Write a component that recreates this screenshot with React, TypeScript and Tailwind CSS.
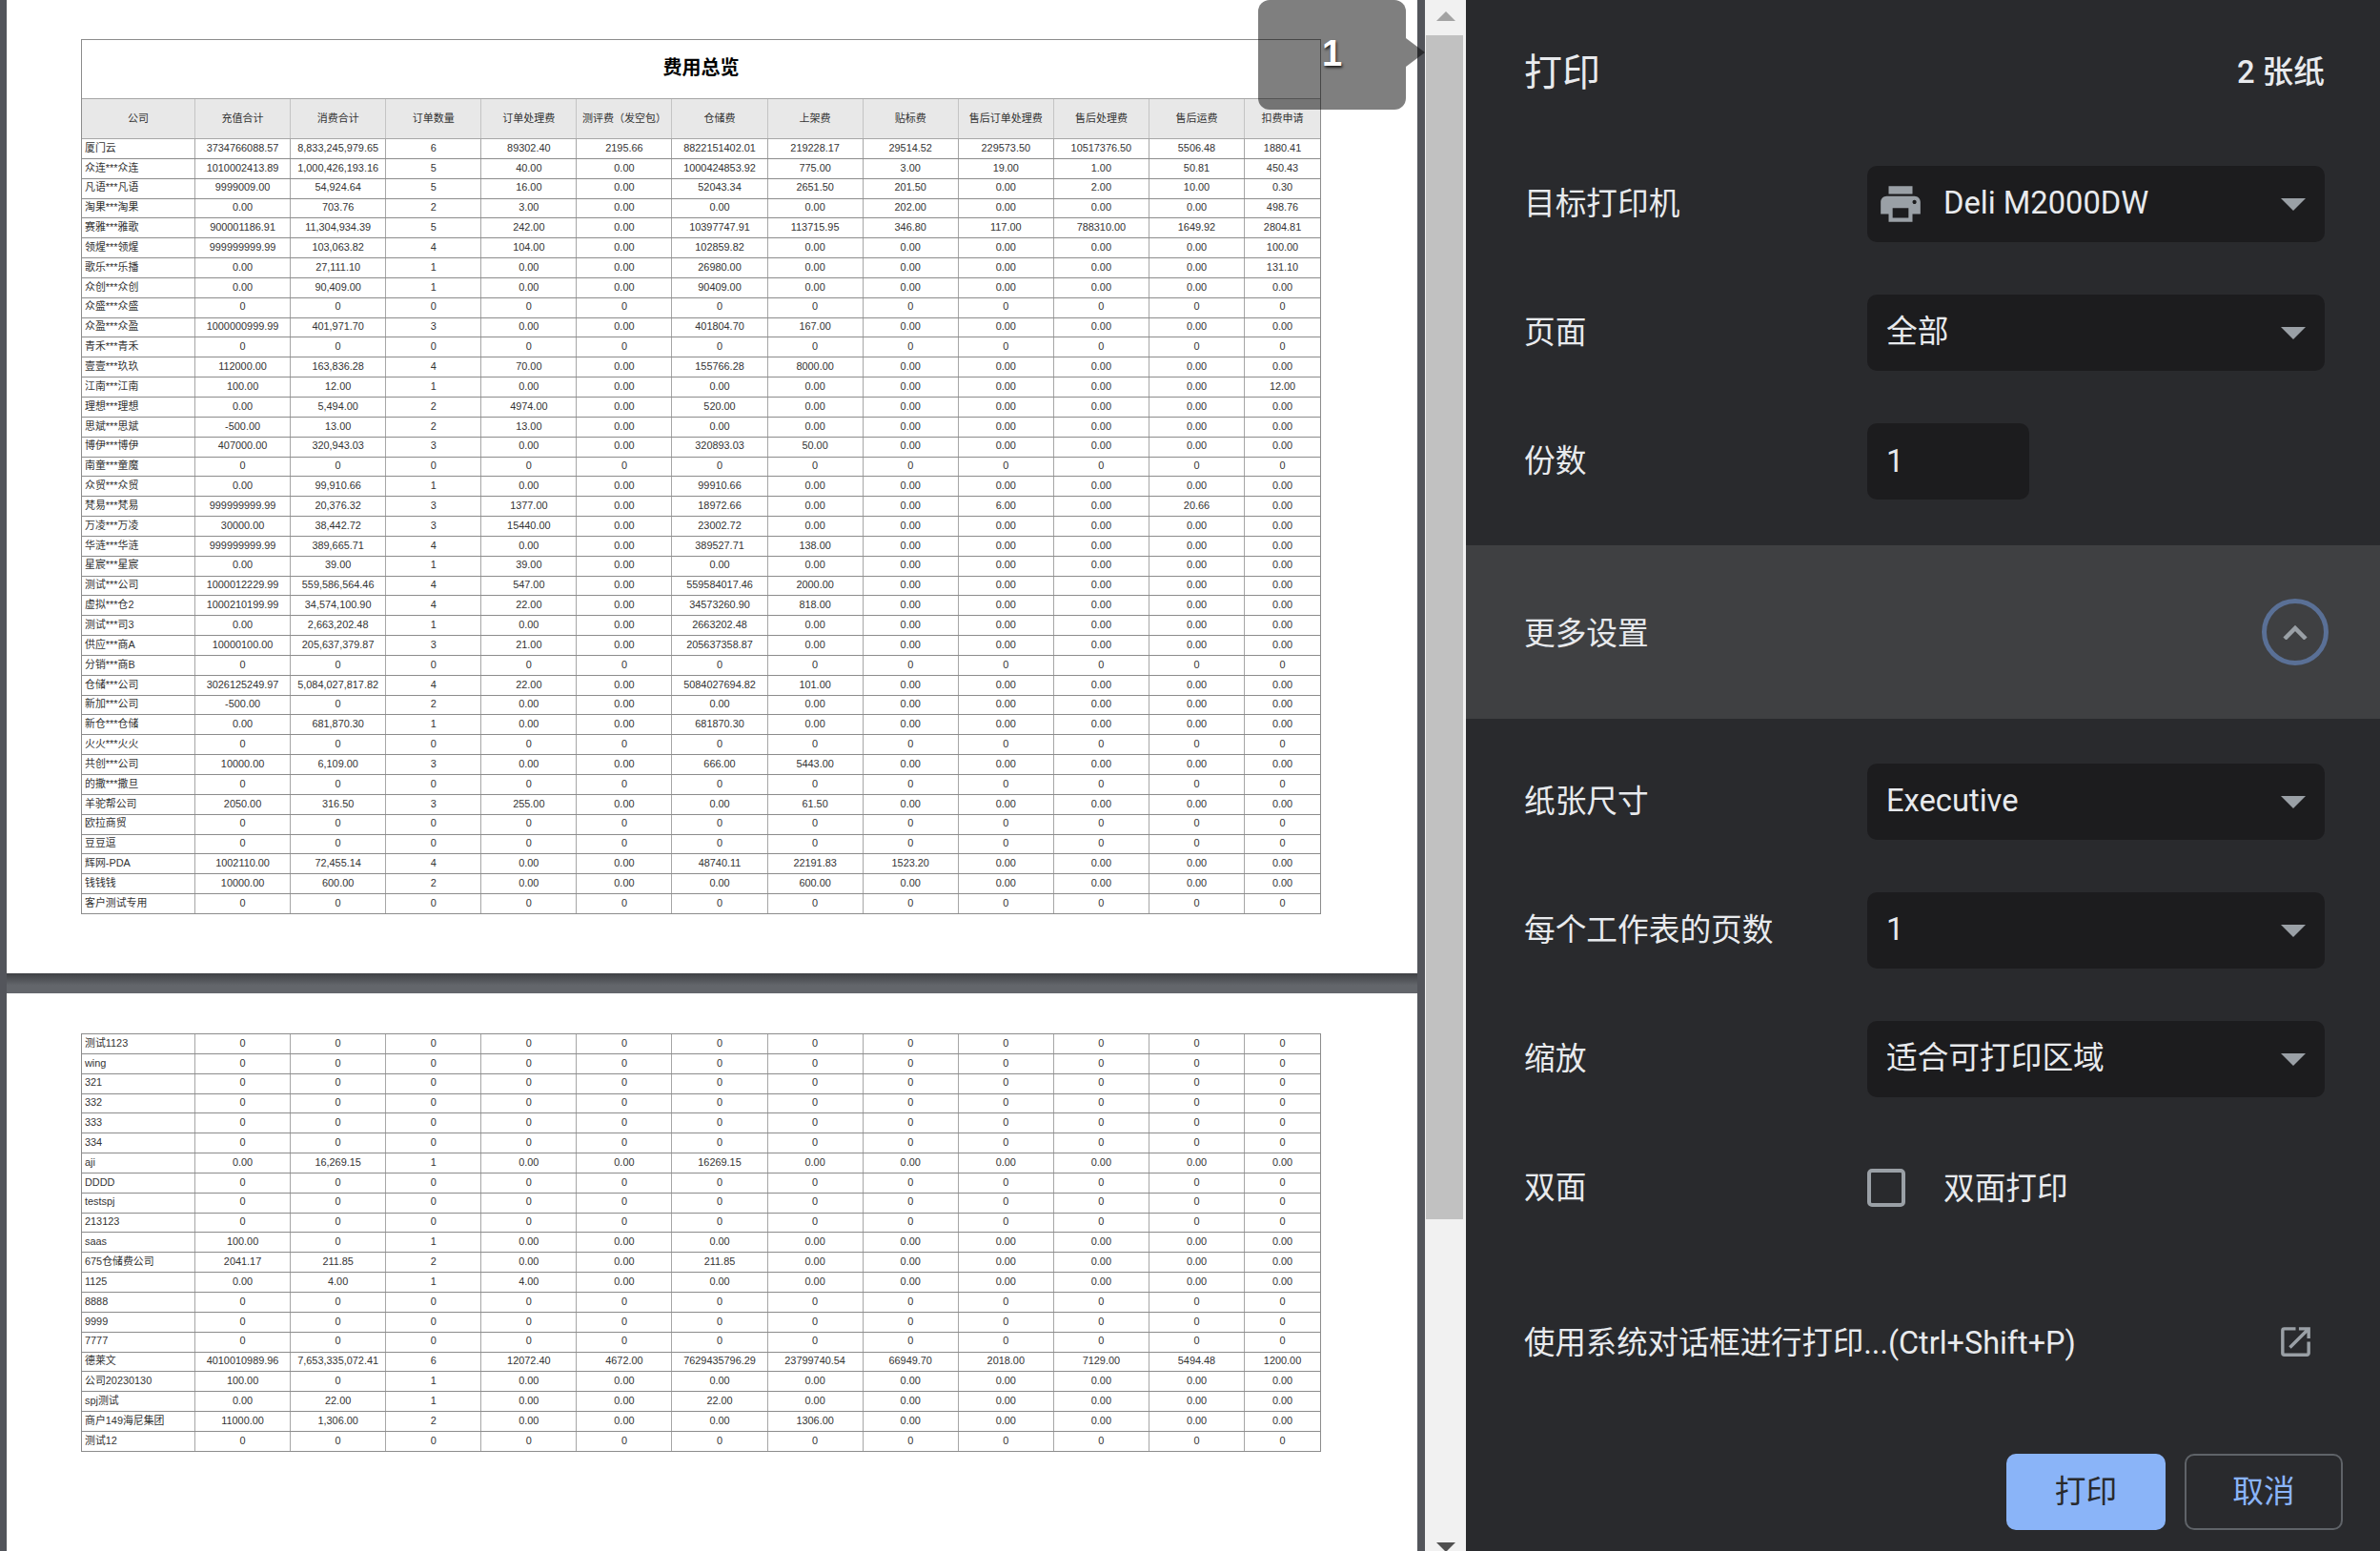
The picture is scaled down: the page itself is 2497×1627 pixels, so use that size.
const headers = ["公司", "充值合计", "消费合计", "订单数量", "订单处理费", "测评费（发空包）", "仓储费", "上架费", "贴标费", "售后订单处理费", "售后处理费", "售后运费", "扣费申请"];

// name|充值|消费|订单数|处理费|测评费|仓储费|上架费|贴标费|售后订单|售后处理|售后运费|扣费
// a row with only a name is all zeros, missing tail values are 0.00
const pageOne = [
  "厦门云|3734766088.57|8,833,245,979.65|6|89302.40|2195.66|8822151402.01|219228.17|29514.52|229573.50|10517376.50|5506.48|1880.41",
  "众连***众连|1010002413.89|1,000,426,193.16|5|40.00|0.00|1000424853.92|775.00|3.00|19.00|1.00|50.81|450.43",
  "凡语***凡语|9999009.00|54,924.64|5|16.00|0.00|52043.34|2651.50|201.50|0.00|2.00|10.00|0.30",
  "淘果***淘果|0.00|703.76|2|3.00|0.00|0.00|0.00|202.00|0.00|0.00|0.00|498.76",
  "赛雅***雅歌|900001186.91|11,304,934.39|5|242.00|0.00|10397747.91|113715.95|346.80|117.00|788310.00|1649.92|2804.81",
  "领煋***领煋|999999999.99|103,063.82|4|104.00|0.00|102859.82|0.00|0.00|0.00|0.00|0.00|100.00",
  "歌乐***乐播|0.00|27,111.10|1|0.00|0.00|26980.00|0.00|0.00|0.00|0.00|0.00|131.10",
  "众创***众创|0.00|90,409.00|1|0.00|0.00|90409.00",
  "众盛***众盛",
  "众盈***众盈|1000000999.99|401,971.70|3|0.00|0.00|401804.70|167.00",
  "青禾***青禾",
  "壹壹***玖玖|112000.00|163,836.28|4|70.00|0.00|155766.28|8000.00",
  "江南***江南|100.00|12.00|1|0.00|0.00|0.00|0.00|0.00|0.00|0.00|0.00|12.00",
  "理想***理想|0.00|5,494.00|2|4974.00|0.00|520.00",
  "思斌***思斌|-500.00|13.00|2|13.00|0.00|0.00",
  "博伊***博伊|407000.00|320,943.03|3|0.00|0.00|320893.03|50.00",
  "南童***童魔",
  "众贸***众贸|0.00|99,910.66|1|0.00|0.00|99910.66",
  "梵易***梵易|999999999.99|20,376.32|3|1377.00|0.00|18972.66|0.00|0.00|6.00|0.00|20.66|0.00",
  "万凌***万凌|30000.00|38,442.72|3|15440.00|0.00|23002.72",
  "华涟***华涟|999999999.99|389,665.71|4|0.00|0.00|389527.71|138.00",
  "星宸***星宸|0.00|39.00|1|39.00|0.00|0.00",
  "测试***公司|1000012229.99|559,586,564.46|4|547.00|0.00|559584017.46|2000.00",
  "虚拟***仓2|1000210199.99|34,574,100.90|4|22.00|0.00|34573260.90|818.00",
  "测试***司3|0.00|2,663,202.48|1|0.00|0.00|2663202.48",
  "供应***商A|10000100.00|205,637,379.87|3|21.00|0.00|205637358.87",
  "分销***商B",
  "仓储***公司|3026125249.97|5,084,027,817.82|4|22.00|0.00|5084027694.82|101.00",
  "新加***公司|-500.00|0|2|0.00|0.00|0.00",
  "新仓***仓储|0.00|681,870.30|1|0.00|0.00|681870.30",
  "火火***火火",
  "共创***公司|10000.00|6,109.00|3|0.00|0.00|666.00|5443.00",
  "的撒***撒旦",
  "羊驼帮公司|2050.00|316.50|3|255.00|0.00|0.00|61.50",
  "欧拉商贸",
  "豆豆逗",
  "辉网-PDA|1002110.00|72,455.14|4|0.00|0.00|48740.11|22191.83|1523.20",
  "钱钱钱|10000.00|600.00|2|0.00|0.00|0.00|600.00",
  "客户测试专用",
];

const pageTwo = [
  "测试1123",
  "wing",
  "321",
  "332",
  "333",
  "334",
  "aji|0.00|16,269.15|1|0.00|0.00|16269.15",
  "DDDD",
  "testspj",
  "213123",
  "saas|100.00|0|1|0.00|0.00|0.00",
  "675仓储费公司|2041.17|211.85|2|0.00|0.00|211.85",
  "1125|0.00|4.00|1|4.00|0.00|0.00",
  "8888",
  "9999",
  "7777",
  "德莱文|4010010989.96|7,653,335,072.41|6|12072.40|4672.00|7629435796.29|23799740.54|66949.70|2018.00|7129.00|5494.48|1200.00",
  "公司20230130|100.00|0|1|0.00|0.00|0.00",
  "spj测试|0.00|22.00|1|0.00|0.00|22.00",
  "商户149海尼集团|11000.00|1,306.00|2|0.00|0.00|0.00|1306.00",
  "测试12",
];

const parseRow = (line: string) => {
  const parts = line.split("|");
  const fill = parts.length === 1 ? "0" : "0.00";
  return Array.from({ length: 13 }, (_, i) => parts[i] ?? fill);
};

const Row = ({ line }: { line: string }) => (
  <div className="grid h-[20.85px] grid-cols-[119px_repeat(11,100.1px)_1fr] border-b border-[#8c8c8c]">
    {parseRow(line).map((cell, i) => (
      <div
        key={i}
        className={
          i === 0
            ? "flex items-center border-r border-[#a6a6a6] pb-[2px] pl-[3px] whitespace-nowrap"
            : "flex items-center justify-center border-r border-[#a6a6a6] pb-[2px] whitespace-nowrap last:border-r-0"
        }
      >
        {cell}
      </div>
    ))}
  </div>
);

const Caret = () => (
  <svg viewBox="0 0 26 13" className="h-[13px] w-[26px] shrink-0">
    <polygon points="0,0 26,0 13,13" fill="#9aa0a6" />
  </svg>
);

const Select = ({ children }: { children: React.ReactNode }) => (
  <div className="flex h-[80px] w-[480px] items-center justify-between rounded-[10px] bg-[#1c1c1e] pr-5 pl-5">
    <div className="flex items-center pb-[2px]">{children}</div>
    <Caret />
  </div>
);

const Field = ({ label, children, className }: { label: string; children: React.ReactNode; className: string }) => (
  <div className={`flex items-center ${className}`}>
    <div className="w-[360px]">{label}</div>
    {children}
  </div>
);

export default function App() {
  return (
    <div className="relative flex h-[1627px] w-[2497px] overflow-hidden bg-[#292a2d]">
      {/* preview */}
      <div className="flex h-full w-[1495px] shrink-0 flex-col bg-[#53555b] pr-2 pl-[7px] font-['Liberation_Sans','Noto_Sans_CJK_SC',sans-serif] text-[10.9px] text-[#333]">
        <div className="h-[1021px] shrink-0 bg-white pt-[41px] pl-[78px]">
          <div className="w-[1301px] border-t border-l border-r border-[#8c8c8c]">
            <div className="flex h-[62px] items-center justify-center border-b border-[#a6a6a6] pb-[3px] text-[20px] font-bold text-black">
              费用总览
            </div>
            <div className="grid h-[42px] grid-cols-[119px_repeat(11,100.1px)_1fr] border-b border-[#a6a6a6] bg-[#e8e8e8]">
              {headers.map((h) => (
                <div key={h} className="flex items-center justify-center border-r border-[#c4c4c4] text-[11px] whitespace-nowrap last:border-r-0">
                  {h}
                </div>
              ))}
            </div>
            {pageOne.map((line) => (
              <Row key={line} line={line} />
            ))}
          </div>
        </div>
        <div className="h-[21px] shrink-0 bg-gradient-to-b from-[#3f4145] to-[#63666b] to-60%" />
        <div className="flex-1 bg-white pt-[42px] pl-[78px]">
          <div className="w-[1301px] border-t border-l border-r border-[#8c8c8c]">
            {pageTwo.map((line) => (
              <Row key={line} line={line} />
            ))}
          </div>
        </div>
      </div>

      {/* scrollbar */}
      <div className="flex h-full w-[43px] shrink-0 flex-col bg-[#f1f1f1]">
        <div className="flex h-[37px] items-start justify-center pt-3">
          <svg viewBox="0 0 20 10" className="h-[10px] w-[20px]">
            <polygon points="10,0 20,10 0,10" fill="#a3a3a3" />
          </svg>
        </div>
        <div className="ml-px h-[1242px] w-[39px] bg-[#c1c1c1]" />
        <div className="flex-1" />
        <div className="flex h-[9px] justify-center overflow-hidden">
          <svg viewBox="0 0 20 10" className="h-[10px] w-[20px] shrink-0">
            <polygon points="0,0 20,0 10,10" fill="#505050" />
          </svg>
        </div>
      </div>

      {/* settings panel */}
      <div className="flex h-full flex-1 flex-col font-[Roboto,'Noto_Sans_CJK_SC',sans-serif] text-[32.7px] leading-none text-[#e8eaed]">
        <div className="flex h-[150px] shrink-0 items-center justify-between pr-[58px] pl-[61px]">
          <div className="pt-[3px] text-[40px]">打印</div>
          <div className="pt-[2px] font-medium">2 张纸</div>
        </div>
        <Field label="目标打印机" className="mt-6 pl-[61px]">
          <div className="flex h-[80px] w-[480px] items-center justify-between rounded-[10px] bg-[#1c1c1e] pr-5 pl-[10px]">
            <div className="flex items-center gap-[20px]">
              <svg viewBox="0 0 24 24" className="h-[50px] w-[50px]" fill="#9aa0a6">
                <path d="M19 8H5c-1.66 0-3 1.34-3 3v6h4v4h12v-4h4v-6c0-1.66-1.34-3-3-3zm-3 11H8v-5h8v5zm3-7c-.55 0-1-.45-1-1s.45-1 1-1 1 .45 1 1-.45 1-1 1zm-1-9H6v4h12V3z" />
              </svg>
              <span className="pb-[2px]">Deli M2000DW</span>
            </div>
            <Caret />
          </div>
        </Field>
        <Field label="页面" className="mt-[55px] pl-[61px]">
          <Select>全部</Select>
        </Field>
        <Field label="份数" className="mt-[55px] pl-[61px]">
          <div className="flex h-[80px] w-[170px] items-center rounded-[10px] bg-[#1c1c1e] pl-5">1</div>
        </Field>

        <div className="mt-[48px] flex h-[182px] shrink-0 items-center justify-between bg-[#3f4042] pr-[54px] pl-[61px]">
          <div className="pt-[4px]">更多设置</div>
          <div className="flex h-[70px] w-[70px] items-center justify-center rounded-full border-[5px] border-[#5a7096]">
            <svg viewBox="0 0 26 15" className="h-[15px] w-[26px]" fill="none" stroke="#9aa0a6" strokeWidth="4.5">
              <polyline points="2,14 13,3 24,14" />
            </svg>
          </div>
        </div>

        <Field label="纸张尺寸" className="mt-[47px] pl-[61px]">
          <Select>Executive</Select>
        </Field>
        <Field label="每个工作表的页数" className="mt-[55px] pl-[61px]">
          <Select>1</Select>
        </Field>
        <Field label="缩放" className="mt-[55px] pl-[61px]">
          <Select>适合可打印区域</Select>
        </Field>
        <Field label="双面" className="mt-[75px] h-10 pl-[61px]">
          <div className="flex items-center gap-10">
            <div className="h-10 w-10 rounded-[5px] border-[4px] border-[#9aa0a6]" />
            <span className="pt-[2px]">双面打印</span>
          </div>
        </Field>
        <div className="mt-[103px] flex h-[80px] shrink-0 items-center justify-between pr-[68px] pl-[61px]">
          <span className="text-[32.4px]">使用系统对话框进行打印...(Ctrl+Shift+P)</span>
          <svg viewBox="0 0 24 24" className="mb-1 h-[41px] w-[41px]" fill="#9aa0a6">
            <path d="M19 19H5V5h7V3H5a2 2 0 0 0-2 2v14a2 2 0 0 0 2 2h14c1.1 0 2-.9 2-2v-7h-2v7zM14 3v2h3.59l-9.83 9.83 1.41 1.41L19 6.41V10h2V3h-7z" />
          </svg>
        </div>
        <div className="mt-[76px] flex justify-end gap-5 pr-[39px]">
          <div className="flex h-[80px] w-[167px] items-center justify-center rounded-[10px] bg-[#8ab4f8] text-[#292a2d]">打印</div>
          <div className="flex h-[80px] w-[166px] items-center justify-center rounded-[10px] border-2 border-[#5f6368] text-[#8ab4f8]">取消</div>
        </div>
      </div>

      {/* page number bubble */}
      <div className="absolute top-0 left-[1320px] flex h-[115px] w-[155px] items-center justify-center rounded-[12px] bg-black/50 pb-[2px] font-['Liberation_Sans',sans-serif] text-[38px] font-bold text-white [text-shadow:1px_2px_3px_rgba(0,0,0,0.8)]">
        1
        <svg viewBox="0 0 20 30" className="absolute top-[40px] left-full h-[30px] w-[20px]">
          <polygon points="0,0 20,15 0,30" fill="rgba(0,0,0,0.5)" />
        </svg>
      </div>
    </div>
  );
}
